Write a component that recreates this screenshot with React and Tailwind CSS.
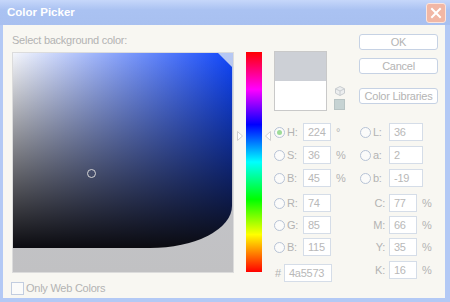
import React from 'react'

const font = { fontFamily: '"Liberation Sans", Arial, sans-serif' }

const Radio = ({ on }) => (
    <span className="w-[11px] h-[11px] rounded-full border border-[#b7c3d6] bg-[#fbfbfa] flex items-center justify-center shrink-0">
        {on && <span className="w-[5px] h-[5px] rounded-full bg-[#9edc98]" />}
    </span>
)

const Box = ({ w, children }) => (
    <div className={`h-[18px] ${w} border border-[#d5dde8] bg-white flex items-center pl-[4px] text-[#b8b8b8]`}>{children}</div>
)

const LeftRow = ({ label, value, unit, on, className = '' }) => (
    <div className={`flex items-center h-[18px] ${className}`}>
        <Radio on={on} />
        <span className="w-[18px] pl-[2px]">{label}</span>
        <Box w="w-[28px]">{value}</Box>
        <span className="pl-[5px]">{unit}</span>
    </div>
)

const RightRow = ({ label, value, className = '' }) => (
    <div className={`flex items-center h-[18px] ${className}`}>
        <Radio />
        <span className="w-[18px] pl-[2px]">{label}</span>
        <Box w="w-[34px]">{value}</Box>
    </div>
)

const CmykRow = ({ label, value, className = '' }) => (
    <div className={`flex items-center h-[18px] ${className}`}>
        <span className="w-[29px] text-right pr-[4px]">{label}</span>
        <Box w="w-[28px]">{value}</Box>
        <span className="pl-[5px]">%</span>
    </div>
)

const Button = ({ children, className = '' }) => (
    <div className={`w-[79px] h-[16px] rounded-[3px] border border-[#c6d2e4] bg-white flex items-center justify-center text-[#b4b4b4] ${className}`}>
        {children}
    </div>
)

export default function App() {
    return (
        <div style={font} className="w-[450px] h-[302px] bg-[#b3c9f5] flex flex-col text-[11px] text-[#b3b3b3] leading-[13px] tracking-[-0.25px]">
            {/* title bar */}
            <div className="h-[25px] flex items-center justify-between pl-[7px] pr-[4px] bg-[linear-gradient(to_bottom,#c6d7fa,#aac2f2_40%,#a8c0f0)]">
                <span className="text-white font-bold text-[11.5px] tracking-[0px]">Color Picker</span>
                <span className="w-[20px] h-[20px] rounded-[3px] border border-[#fbe4dc] bg-[#f1b7a5] flex items-center justify-center">
                    <svg width="12" height="12" viewBox="0 0 12 12">
                        <path d="M2 2 L10 10 M10 2 L2 10" stroke="white" strokeWidth="2" strokeLinecap="square" />
                    </svg>
                </span>
            </div>

            <div className="flex-1 ml-[3px] mr-[5px] mb-[4px] bg-[#f8f7f2] flex pl-[9px]">
                {/* left column */}
                <div className="w-[222px] flex flex-col">
                    <div className="mt-[9px] h-[13px]">Select background color:</div>
                    <div className="mt-[5px] w-[222px] h-[221px] border border-[#dcdcdc] relative bg-[linear-gradient(to_bottom,#b6c8f4,#c4c6cc_35%,#c1c1c3)]">
                        <div className="w-[219px] h-[195px] rounded-br-[82px_42px] [clip-path:polygon(0_0,205px_0,219px_14px,219px_100%,0_100%)] bg-[linear-gradient(to_top,#0b0b10,rgba(0,0,0,0)),linear-gradient(to_right,#f4f6fb,#1046fb)]" />
                        <span className="absolute left-[74px] top-[116px] w-[9px] h-[9px] rounded-full border border-[#d6d6d6]" />
                    </div>
                    <div className="mt-[9px] flex items-center">
                        <span className="w-[13px] h-[13px] border border-[#c2cde0] bg-[#fbfbfa] -ml-[1px]" />
                        <span className="pl-[2px]">Only Web Colors</span>
                    </div>
                </div>

                {/* hue slider */}
                <div className="ml-[12px] mt-[27px] w-[16px] h-[220px] relative bg-[linear-gradient(to_bottom,#ff0000,#ff00ff_17%,#0000ff_33%,#00ffff_50%,#00ff00_67%,#ffff00_83%,#ff0000)]">
                    <svg className="absolute -left-[9px] top-[79px]" width="6" height="10" viewBox="0 0 6 10">
                        <path d="M0.5 0.5 L5.5 5 L0.5 9.5 Z" fill="white" stroke="#d0d0d0" />
                    </svg>
                    <svg className="absolute -right-[9px] top-[79px]" width="6" height="10" viewBox="0 0 6 10">
                        <path d="M5.5 0.5 L0.5 5 L5.5 9.5 Z" fill="white" stroke="#d0d0d0" />
                    </svg>
                </div>

                {/* right panel */}
                <div className="ml-[12px] flex flex-col">
                    <div className="flex">
                        <div className="mt-[26px] w-[53px] h-[60px] border border-[#c9c9c9] flex flex-col">
                            <div className="h-[29px] bg-[#cdd0d6]" />
                            <div className="flex-1 bg-white" />
                        </div>
                        <div className="ml-[7px] mt-[61px] flex flex-col items-center">
                            <svg width="10" height="10" viewBox="0 0 10 10">
                                <path d="M5 0.5 L9.5 2.8 L9.5 7.2 L5 9.5 L0.5 7.2 L0.5 2.8 Z" fill="#eceeef" stroke="#c8cccf" />
                                <path d="M0.5 2.8 L5 5 L9.5 2.8 M5 5 L5 9.5" fill="none" stroke="#c8cccf" />
                            </svg>
                            <span className="mt-[3px] w-[11px] h-[11px] bg-[#c6d3d3] border border-[#b8c4c4]" />
                        </div>
                        <div className="ml-[14px] mt-[9px] flex flex-col">
                            <Button>OK</Button>
                            <Button className="mt-[8px]">Cancel</Button>
                            <Button className="mt-[14px]">Color Libraries</Button>
                        </div>
                    </div>

                    <div className="mt-[12px] flex">
                        <div className="w-[86px] flex flex-col">
                            <LeftRow label="H:" value="224" unit="°" on />
                            <LeftRow label="S:" value="36" unit="%" className="mt-[5px]" />
                            <LeftRow label="B:" value="45" unit="%" className="mt-[5px]" />
                            <LeftRow label="R:" value="74" className="mt-[7px]" />
                            <LeftRow label="G:" value="85" className="mt-[4px]" />
                            <LeftRow label="B:" value="115" className="mt-[4px]" />
                            <div className="mt-[8px] flex items-center h-[18px]">
                                <span className="w-[10px] pl-[1px]">#</span>
                                <Box w="w-[48px]">4a5573</Box>
                            </div>
                        </div>
                        <div className="flex flex-col">
                            <RightRow label="L:" value="36" />
                            <RightRow label="a:" value="2" className="mt-[5px]" />
                            <RightRow label="b:" value="-19" className="mt-[5px]" />
                            <CmykRow label="C:" value="77" className="mt-[7px]" />
                            <CmykRow label="M:" value="66" className="mt-[4px]" />
                            <CmykRow label="Y:" value="35" className="mt-[4px]" />
                            <CmykRow label="K:" value="16" className="mt-[5px]" />
                        </div>
                    </div>
                </div>
            </div>
        </div>
    )
}
